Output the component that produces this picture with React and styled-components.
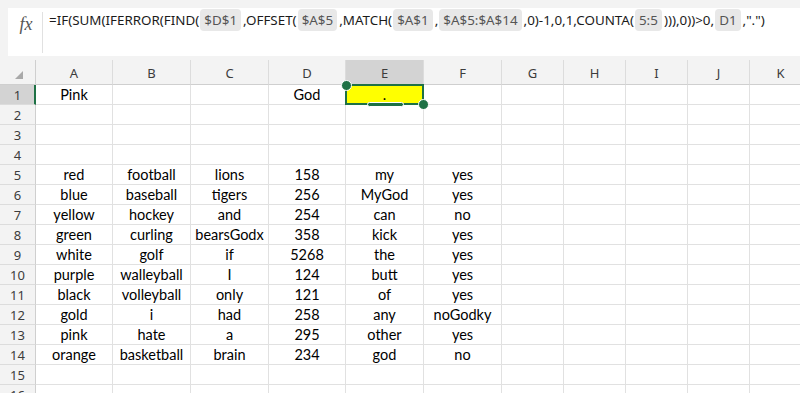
import React from "react";
import styled, { createGlobalStyle } from "styled-components";

const GREEN = "#1e7145";

const GlobalStyle = createGlobalStyle`
  html, body { margin: 0; padding: 0; background: #f3f3f3; overflow: hidden; }
  * { box-sizing: border-box; }
`;

const Page = styled.div`
  width: 800px;
  height: 393px;
  display: flex;
  flex-direction: column;
  background: #f3f3f3;
  overflow: hidden;
`;

const FormulaArea = styled.div`
  padding: 8px 0 4px 8px;
`;

const FormulaBox = styled.div`
  height: 48px;
  background: #ffffff;
  display: flex;
  align-items: stretch;
`;

const FxCell = styled.div`
  width: 35px;
  margin: 4px 0 3px;
  border-right: 1px solid #e1e1e1;
  display: flex;
  justify-content: center;
  padding-top: 1px;
  font-family: "Liberation Serif", "DejaVu Serif", serif;
  font-style: italic;
  font-size: 18px;
  color: #555;
  line-height: 22px;
  padding-left: 2px;
`;

const FormulaText = styled.div`
  padding: 1px 0 0 6px;
  font-family: "Noto Sans", "Open Sans", sans-serif;
  font-size: 13.4px;
  line-height: 22px;
  color: #1b1b1b;
  white-space: nowrap;
  display: flex;
  align-items: flex-start;
`;

const Ref = styled.span`
  display: inline-block;
  height: 22px;
  padding: 0 4px;
  margin: 0 2px 0 1px;
  background: #e8e8e8;
  border-radius: 4px;
  color: #555;
`;

const Sheet = styled.div`
  display: grid;
  grid-template-columns: 36px 77px 78px 78px 77px 78px 78px 62px 62px 62px 62px 62px;
  grid-template-rows: 25px repeat(16, 20px);
  background: #ffffff;
`;

const Corner = styled.div`
  background: #f3f3f3;
  border-right: 1px solid #cfcfcf;
  border-bottom: 1px solid #cfcfcf;
  position: relative;
  display: flex;
  align-items: flex-end;
  justify-content: center;
  padding-bottom: 5px;
`;

const CornerTriangle = styled.div`
  width: 0;
  height: 0;
  margin-left: 2px;
  border-left: 8px solid transparent;
  border-bottom: 8px solid #a9a9a9;
`;

const ColHeader = styled.div`
  background: ${(p) => (p.$selected ? "#d3d3d3" : "#f3f3f3")};
  border-right: 1px solid #dcdcdc;
  border-bottom: 1px solid ${(p) => (p.$selected ? "#d3d3d3" : "#cfcfcf")};
  display: flex;
  align-items: center;
  justify-content: center;
  font-family: "Noto Sans", "Open Sans", sans-serif;
  font-size: 13px;
  color: #3c3c3c;
  padding-top: 1px;
`;

const RowHeader = styled.div`
  background: ${(p) => (p.$selected ? "#d3d3d3" : "#f3f3f3")};
  border-right: ${(p) => (p.$selected ? `2px solid ${GREEN}` : "1px solid #cfcfcf")};
  border-bottom: 1px solid #dcdcdc;
  display: flex;
  align-items: center;
  justify-content: center;
  font-family: "Noto Sans", "Open Sans", sans-serif;
  font-size: 13px;
  color: #3c3c3c;
  padding-left: ${(p) => (p.$selected ? "1px" : "0")};
`;

const Cell = styled.div`
  position: relative;
  background: ${(p) => p.$fill || "#ffffff"};
  border-right: 1px solid #e1e1e1;
  border-bottom: 1px solid #e1e1e1;
  display: flex;
  align-items: center;
  justify-content: center;
  font-family: Lato, "Liberation Sans", sans-serif;
  font-size: 14.5px;
  color: #000;
  white-space: nowrap;
  padding-bottom: 1px;
`;

const Selection = styled.div`
  position: absolute;
  top: -1px;
  left: -1px;
  right: -1px;
  bottom: -1px;
  border: 2px solid ${GREEN};
  pointer-events: none;
  z-index: 2;
`;

const Handle = styled.div`
  position: absolute;
  width: 11px;
  height: 11px;
  border-radius: 50%;
  background: ${GREEN};
  border: 1.5px solid #ffffff;
  ${(p) => (p.$pos === "tl" ? "top: -6.5px; left: -6.5px;" : "bottom: -6.5px; right: -6.5px;")}
`;

const BarHandle = styled.div`
  position: absolute;
  left: 20px;
  width: 37px;
  bottom: -3.5px;
  height: 5px;
  border-radius: 3px;
  background: ${GREEN};
  border: 1px solid #ffffff;
`;

const columns = ["A", "B", "C", "D", "E", "F", "G", "H", "I", "J", "K"];

const data = {
  1: ["Pink", "", "", "God", "."],
  5: ["red", "football", "lions", "158", "my", "yes"],
  6: ["blue", "baseball", "tigers", "256", "MyGod", "yes"],
  7: ["yellow", "hockey", "and", "254", "can", "no"],
  8: ["green", "curling", "bearsGodx", "358", "kick", "yes"],
  9: ["white", "golf", "if", "5268", "the", "yes"],
  10: ["purple", "walleyball", "I", "124", "butt", "yes"],
  11: ["black", "volleyball", "only", "121", "of", "yes"],
  12: ["gold", "i", "had", "258", "any", "noGodky"],
  13: ["pink", "hate", "a", "295", "other", "yes"],
  14: ["orange", "basketball", "brain", "234", "god", "no"],
};

export default function App() {
  const rows = Array.from({ length: 16 }, (_, i) => i + 1);
  return (
    <Page>
      <GlobalStyle />
      <FormulaArea>
        <FormulaBox>
          <FxCell>fx</FxCell>
          <FormulaText>
            <span>=IF(SUM(IFERROR(FIND(</span>
            <Ref>$D$1</Ref>
            <span>,OFFSET(</span>
            <Ref>$A$5</Ref>
            <span>,MATCH(</span>
            <Ref>$A$1</Ref>
            <span>,</span>
            <Ref>$A$5:$A$14</Ref>
            <span>,0)-1,0,1,COUNTA(</span>
            <Ref>5:5</Ref>
            <span>))),0))&gt;0,</span>
            <Ref>D1</Ref>
            <span>,"."&#41;</span>
          </FormulaText>
        </FormulaBox>
      </FormulaArea>
      <Sheet>
        <Corner>
          <CornerTriangle />
        </Corner>
        {columns.map((c) => (
          <ColHeader key={c} $selected={c === "E"}>
            {c}
          </ColHeader>
        ))}
        {rows.map((r) => (
          <React.Fragment key={r}>
            <RowHeader $selected={r === 1}>{r}</RowHeader>
            {columns.map((c, ci) => {
              const value = (data[r] && data[r][ci]) || "";
              const isSel = r === 1 && c === "E";
              return (
                <Cell key={c} $fill={isSel ? "#ffff00" : undefined}>
                  {value}
                  {isSel && (
                    <Selection>
                      <Handle $pos="tl" />
                      <Handle $pos="br" />
                      <BarHandle />
                    </Selection>
                  )}
                </Cell>
              );
            })}
          </React.Fragment>
        ))}
      </Sheet>
    </Page>
  );
}
